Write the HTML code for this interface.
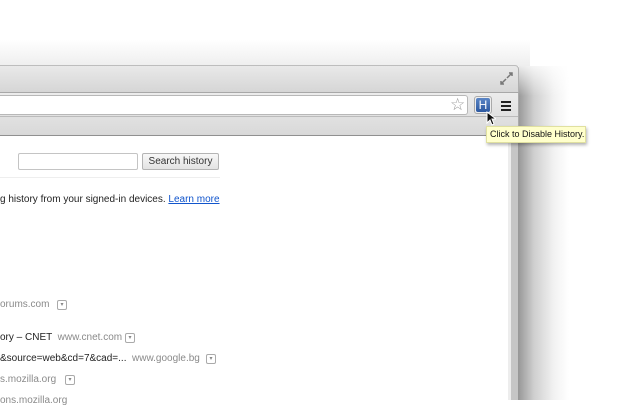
<!DOCTYPE html>
<html><head><style>
body{margin:0;width:640px;height:400px;overflow:hidden;background:#fff;position:relative;font-family:"Liberation Sans","DejaVu Sans",sans-serif;}
.a{position:absolute}
.dd{position:absolute;width:8px;height:8px;border:1px solid #aaa;border-radius:2px;font-size:6px;color:#888;text-align:center;line-height:8px}
.t{position:absolute;font-size:10px;white-space:nowrap}
.g{color:#8a8a8a}
</style></head><body>
<!-- shadows -->
<div class="a" style="left:0;top:40px;width:530px;height:26px;background:linear-gradient(#fff,#eee)"></div>
<div class="a" style="left:519px;top:66px;width:50px;height:334px;background:linear-gradient(90deg,#9a9a9a,#cfcfcf 30%,#f2f2f2 70%,#fff)"></div>
<div class="a" style="left:519px;top:66px;width:50px;height:30px;background:linear-gradient(rgba(255,255,255,.8),rgba(255,255,255,0))"></div>
<!-- title bar -->
<div class="a" style="left:0;top:65px;width:519px;height:28px;background:linear-gradient(#e9e9e9,#d5d5d5);border-top:1px solid #bdbdbd;border-right:1px solid #b0b0b0;border-top-right-radius:4px;box-sizing:border-box"></div>
<div class="a" style="left:0;top:92px;width:519px;height:1px;background:#a8a8a8"></div>
<svg class="a" style="left:500px;top:72px" width="14" height="14"><path d="M7 6L12 1M9 1h3v3M6 7L1 12M1 9v3h3" stroke="#777" stroke-width="1.5" fill="none"/></svg>
<!-- toolbar -->
<div class="a" style="left:0;top:93px;width:518px;height:43px;background:linear-gradient(#ececec,#d8d8d8);border-right:1px solid #aaa"></div>
<div class="a" style="left:0;top:95px;width:468px;height:20px;background:#fff;border:1px solid #b8b8b8;border-left:none;border-radius:0 3px 3px 0;box-sizing:border-box"></div>
<div class="t" style="left:450px;top:95px;font-size:17px;color:#999">☆</div>
<div class="a" style="left:474px;top:96px;width:18px;height:18px;border:1px solid #aaa;border-radius:3px;box-sizing:border-box;background:#eee"></div>
<div class="a" style="left:476px;top:98px;width:14px;height:14px;background:linear-gradient(#5b86c6,#2c58a0);border-radius:2px;color:#fff;font-size:12px;text-align:center;line-height:14px">H</div>
<div class="a" style="left:501px;top:101px;width:10px;height:2px;background:#222;box-shadow:0 4px #222,0 8px #222"></div>
<div class="a" style="left:0;top:116px;width:518px;height:1px;background:#bbb"></div>
<div class="a" style="left:0;top:135px;width:518px;height:1px;background:#909090"></div>
<!-- content -->
<div class="a" style="left:0;top:136px;width:508px;height:264px;background:#fff"></div>
<div class="a" style="left:508px;top:136px;width:3px;height:264px;background:#ededed"></div>
<div class="a" style="left:511px;top:136px;width:7px;height:264px;background:#c6c6c6"></div>
<div class="a" style="left:518px;top:136px;width:1px;height:264px;background:#999"></div>
<div class="a" style="left:18px;top:153px;width:120px;height:17px;border:1px solid #c4c4c4;box-sizing:border-box;border-radius:2px"></div>
<div class="a" style="left:142px;top:153px;width:77px;height:17px;border:1px solid #b4b4b4;box-sizing:border-box;border-radius:2px;background:linear-gradient(#f8f8f8,#e3e3e3);font-size:10px;color:#333;text-align:center;line-height:15px">Search history</div>
<div class="a" style="left:0;top:177px;width:220px;height:1px;background:#eee"></div>
<div class="t" style="left:0;top:194px;color:#222;letter-spacing:0px">g history from your signed-in devices. <span style="color:#1155cc;text-decoration:underline">Learn more</span></div>
<div class="t g" style="left:0;top:299px">orums.com</div><div class="dd" style="left:57px;top:300px">▾</div>
<div class="t" style="left:0;top:332px;color:#222">ory – CNET <span class="g">&nbsp;www.cnet.com</span></div><div class="dd" style="left:125px;top:333px">▾</div>
<div class="t" style="left:0;top:353px;color:#222">&amp;source=web&amp;cd=7&amp;cad=... <span class="g">&nbsp;www.google.bg</span></div><div class="dd" style="left:206px;top:354px">▾</div>
<div class="t g" style="left:0;top:374px">s.mozilla.org</div><div class="dd" style="left:65px;top:375px">▾</div>
<div class="t g" style="left:0;top:395px">ons.mozilla.org</div>
<!-- cursor -->
<svg class="a" style="left:486px;top:111px" width="10" height="15"><path d="M1 1v11l3-3 2 5 2-1-2-5h4z" fill="#111" stroke="#fff" stroke-width="1"/></svg>
<!-- tooltip -->
<div class="a" style="left:486px;top:126px;width:100px;height:17px;background:#ffffcc;border:1px solid #e0e0a0;box-sizing:border-box;box-shadow:1px 2px 3px rgba(0,0,0,.3);font-size:9px;color:#111;line-height:15px;padding-left:3px;white-space:nowrap;overflow:hidden">Click to Disable History.</div>
</body></html>
